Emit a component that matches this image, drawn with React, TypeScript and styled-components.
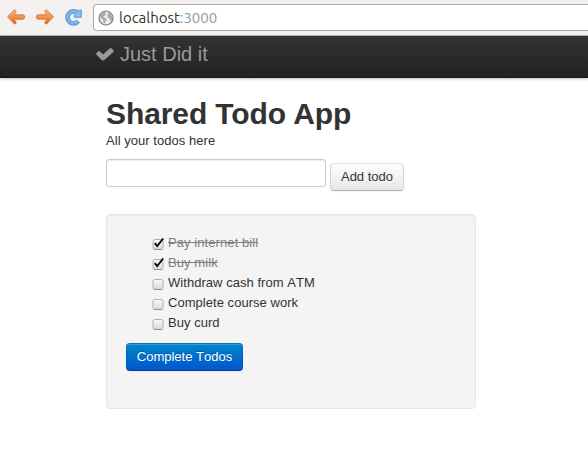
import React, { useState } from 'react';
import styled, { createGlobalStyle } from 'styled-components';

const GlobalStyle = createGlobalStyle`
  * { box-sizing: border-box; }
  html, body { margin: 0; background: #fff; overflow: hidden; }
  body {
    color: #333;
    font: 13px/20px "Liberation Sans", Arial, sans-serif;
    font-kerning: none;
  }
`;

const Toolbar = styled.header`
  display: flex;
  height: 36px;
  padding: 4px 0 0 6px;
  background: #f3f2f1;
  border-bottom: 1px solid #bab8b6;
`;

const NavButton = styled.span`
  width: 20px;
  height: 20px;
  margin: 3px 9px 0 0;
  svg { display: block; }
`;

const AddressBar = styled.div`
  display: flex;
  align-items: center;
  flex: 1;
  height: 27px;
  padding-left: 4px;
  background: #fff;
  border: 1px solid #b5a99c;
  border-right: 0;
  border-radius: 4px 0 0 4px;
  font: 15px/20px Ubuntu, "Noto Sans", sans-serif;
  letter-spacing: -0.03px;
  color: #333;
  svg { flex: none; margin-right: 5px; }
`;

const Host = styled.span`
  color: #333;
`;

const Port = styled.span`
  color: #999;
`;

const Navbar = styled.nav`
  display: flex;
  height: 42px;
  padding: 8px 0 0 95px;
  background: linear-gradient(#333, #222);
  border-bottom: 1px solid #171717;
  box-shadow: 0 1px 3px rgba(0, 0, 0, 0.25);
  color: #999;
  font-size: 20px;
  svg { margin: 3px 5px 0 0; }
`;

const Page = styled.main`
  width: 370px;
  margin: 18px 0 0 106px;
`;

const Title = styled.h1`
  margin: 0;
  font-size: 30px;
  line-height: 36px;
  height: 35px;
  font-kerning: normal;
  letter-spacing: -0.1px;
`;

const Tagline = styled.p`
  margin: 0;
  letter-spacing: 0.04px;
`;

const AddForm = styled.form`
  display: flex;
  gap: 4px;
  margin: 8px 0 23px;
`;

const TodoInput = styled.input`
  width: 220px;
  height: 28px;
  padding: 4px;
  border: 1px solid #ccc;
  border-radius: 3px;
  box-shadow: inset 0 1px 1px rgba(0, 0, 0, 0.075);
  font: inherit;
  outline: 0;
`;

const Button = styled.button<{ $primary?: boolean }>`
  display: block;
  height: 28px;
  width: ${p => (p.$primary ? 117 : 74)}px;
  margin-top: ${p => (p.$primary ? 10 : 4)}px;
  padding: 0;
  font: 13px/18px "Liberation Sans", Arial, sans-serif;
  font-kerning: none;
  white-space: nowrap;
  color: ${p => (p.$primary ? '#fff' : '#333')};
  text-shadow: ${p => (p.$primary ? '0 -1px 0 rgba(0,0,0,.25)' : '0 1px 1px rgba(255,255,255,.75)')};
  background: ${p => (p.$primary ? 'linear-gradient(#08c, #05c)' : 'linear-gradient(#fff, #e6e6e6)')};
  background-clip: ${p => (p.$primary ? 'border-box' : 'padding-box')};
  background-origin: border-box;
  border: 1px solid;
  border-color: ${p => (p.$primary ? 'rgba(0,0,0,.1) rgba(0,0,0,.1) rgba(0,0,0,.25)' : '#e0e0e0 #d4d4d4 #b3b3b3')};
  border-radius: 4px;
  box-shadow: inset 0 1px 0 rgba(255, 255, 255, 0.2), 0 1px 2px rgba(0, 0, 0, 0.05);
`;

const Well = styled.section`
  height: 195px;
  padding: 18px 19px;
  background: #f4f4f4;
  border: 1px solid #e6e6e6;
  border-radius: 4px;
  box-shadow: inset 0 1px 1px rgba(0, 0, 0, 0.05);
`;

const TodoList = styled.ul`
  margin: 0;
  padding: 0 0 0 26px;
  list-style: none;
`;

const TodoItem = styled.li<{ $done: boolean }>`
  display: flex;
  height: 20px;
  letter-spacing: ${p => (p.$done ? 0.08 : 0.04)}px;
  color: ${p => (p.$done ? '#808080' : '#333')};
  text-decoration: ${p => (p.$done ? 'line-through' : 'none')};
`;

const Check = styled.button`
  display: flex;
  align-items: flex-start;
  flex: none;
  width: 12px;
  height: 20px;
  margin-right: 4px;
  padding: 2px 0 0;
  border: 0;
  background: none;
  svg { display: block; overflow: visible; }
`;

const ArrowIcon = ({ flip = false }: { flip?: boolean }) => (
  <svg width="20" height="20" viewBox="0 0 20 20">
    <defs>
      <linearGradient id="orange" x1="0" y1="0" x2="0" y2="1">
        <stop offset="0" stopColor="#f9bd80" />
        <stop offset="0.5" stopColor="#f19547" />
        <stop offset="1" stopColor="#e25a16" />
      </linearGradient>
    </defs>
    <path
      transform={flip ? 'matrix(-1 0 0 1 20 0)' : undefined}
      d="M1.5 9.8 8.2 3.2Q9.8 2.4 10.2 4.4L8 7.8H17.2Q18.7 8.2 18.7 10T17.2 12.2H8L10.2 15.4Q10.2 17.4 8.4 17Z"
      fill="url(#orange)" stroke="#d9733f" strokeWidth="0.9" strokeLinejoin="round"
    />
  </svg>
);

const ReloadIcon = () => (
  <svg width="20" height="20" viewBox="0 0 20 20">
    <path d="M14.2 14.3A6 6 0 1 1 13.7 6.1" fill="none" stroke="#5b98d8" strokeWidth="4.8" />
    <path d="M17.3 3V10.2H10.2V8.2L15.5 3Z" fill="#91bdec" stroke="#5b98d8" strokeWidth="1" strokeLinejoin="round" />
    <path d="M13.8 14.1A5.8 5.8 0 1 1 13.5 6.2" fill="none" stroke="#7fb2e8" strokeWidth="3" />
  </svg>
);

const GlobeIcon = () => (
  <svg width="16" height="16" viewBox="0 0 16 16">
    <circle cx="8" cy="8" r="7" fill="#eee" stroke="#777" strokeWidth="1.2" />
    <path d="M2 5.2 4.7 2.4 8 1.7 7.2 3.4 8.2 4.2 6.4 5.8 5.2 7.2 7.6 8.3 8.8 9.8 7.4 11.8 6.8 13.8 5.3 12.3 5 9.7 2.4 7.8Z" fill="#aaa" />
    <path d="M9.4 3 12 3.2 14.1 6.4 13.9 10 12.1 11.2 11.6 8.6 9.7 7.5 9.2 5.5 10.3 4.4Z" fill="#aaa" />
  </svg>
);

const BrandCheck = () => (
  <svg width="20" height="15" viewBox="0 0 20 15">
    <path
      d="M1.3 6.2 3.3 4.2Q4 3.6 4.7 4.2L8 7.5 14.9 1.2Q15.6 .6 16.3 1.2L18.6 3.4Q19.2 4 18.6 4.7L9.6 12.8Q8 14.2 6.4 12.8L1.3 7.6Q.7 6.9 1.3 6.2Z"
      fill="#999"
    />
  </svg>
);

const CheckboxIcon = ({ checked }: { checked: boolean }) => (
  <svg width="12" height="16" viewBox="0 0 12 16">
    <defs>
      <linearGradient id="box" x1="0" y1="0" x2="0" y2="1">
        <stop offset="0" stopColor="#fafafa" />
        <stop offset="1" stopColor="#d9d9d9" />
      </linearGradient>
    </defs>
    <rect x="1" y="4.5" width="10" height="10" rx="1.8" fill="url(#box)" stroke="#b0b0b0" />
    <path d="M2 14.5H10" stroke="#909090" />
    {checked && <path d="M2.8 8.1 5.2 11 11.2 3.5" fill="none" stroke="#050505" strokeWidth="1.9" />}
  </svg>
);

const initialTodos = [
  { text: 'Pay internet bill', done: true },
  { text: 'Buy milk', done: true },
  { text: 'Withdraw cash from ATM', done: false },
  { text: 'Complete course work', done: false },
  { text: 'Buy curd', done: false },
];

export default function App() {
  const [todos, setTodos] = useState(initialTodos);
  const [draft, setDraft] = useState('');

  const toggle = (index: number) =>
    setTodos(todos.map((t, i) => (i === index ? { ...t, done: !t.done } : t)));

  const add = (event: React.FormEvent) => {
    event.preventDefault();
    if (draft.trim()) setTodos([...todos, { text: draft.trim(), done: false }]);
    setDraft('');
  };

  return (
    <>
      <GlobalStyle />
      <Toolbar>
        <NavButton><ArrowIcon /></NavButton>
        <NavButton><ArrowIcon flip /></NavButton>
        <NavButton><ReloadIcon /></NavButton>
        <AddressBar>
          <GlobeIcon />
          <Host>localhost</Host><Port>:3000</Port>
        </AddressBar>
      </Toolbar>
      <Navbar><BrandCheck />Just Did it</Navbar>
      <Page>
        <Title>Shared Todo App</Title>
        <Tagline>All your todos here</Tagline>
        <AddForm onSubmit={add}>
          <TodoInput value={draft} onChange={e => setDraft(e.target.value)} />
          <Button type="submit">Add todo</Button>
        </AddForm>
        <Well>
          <TodoList>
            {todos.map((todo, i) => (
              <TodoItem key={i} $done={todo.done}>
                <Check type="button" onClick={() => toggle(i)}><CheckboxIcon checked={todo.done} /></Check>
                {todo.text}
              </TodoItem>
            ))}
          </TodoList>
          <Button $primary type="button" onClick={() => setTodos(todos.map(t => ({ ...t, done: true })))}>
            Complete Todos
          </Button>
        </Well>
      </Page>
    </>
  );
}
